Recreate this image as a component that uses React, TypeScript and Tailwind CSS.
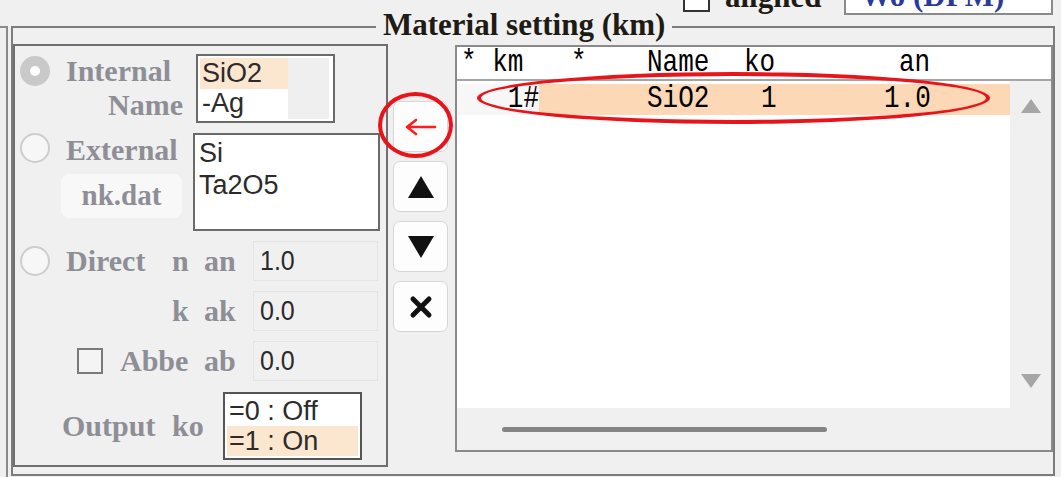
const serif = { fontFamily: '"Liberation Serif", "Times New Roman", serif' };
const sans = { fontFamily: '"Liberation Sans", Arial, sans-serif' };
const mono = { fontFamily: '"Liberation Mono", "Courier New", monospace' };

function Radio({ checked }: { checked?: boolean }) {
  if (checked) {
    return (
      <div className="w-[30px] h-[30px] rounded-full bg-[#c9c9c9] flex items-center justify-center">
        <div className="w-[10px] h-[10px] rounded-full bg-white" />
      </div>
    );
  }
  return <div className="w-[30px] h-[30px] rounded-full bg-[#f7f7f7] border-2 border-[#cdcdcd]" />;
}

function Label({ children, className = "" }: { children: React.ReactNode; className?: string }) {
  return (
    <div className={"text-[30px] font-bold text-[#8e8e96] leading-[34px] whitespace-nowrap " + className} style={serif}>
      {children}
    </div>
  );
}

function ValueBox({ value }: { value: string }) {
  return (
    <div
      className="w-[125px] h-[40px] bg-[#f0f0f0] border border-[#e4e4e4] pl-[6px] flex items-center text-[25px] text-[#2a2a2a]"
      style={sans}
    >
      <span className="inline-block scale-y-[1.12]">{value}</span>
    </div>
  );
}

function Item({ text, selected, w }: { text: string; selected?: boolean; w: string }) {
  return (
    <div
      className={
        "h-[32px] pl-[2px] flex items-center text-[27px] text-[#2b2b2b] leading-none " +
        w +
        (selected ? " bg-[#fbe6d0]" : "")
      }
      style={sans}
    >
      {text}
    </div>
  );
}

function Mono({ children }: { children: React.ReactNode }) {
  return <span className="inline-block scale-y-[1.22]">{children}</span>;
}

function SideButton({ children }: { children: React.ReactNode }) {
  return (
    <div className="w-[55px] h-[51px] bg-[#fdfdfd] border border-[#d6d6d6] rounded-[7px] flex items-center justify-center">
      {children}
    </div>
  );
}

export default function App() {
  return (
    <div className="relative w-[1061px] h-[477px] overflow-hidden bg-[#f0f0f0] flex items-start">
      {/* edge of the previous group */}
      <div className="w-[8px] h-[460px] mt-[26px] border-t-2 border-r-2 border-[#8a8a8a]" />

      {/* Material setting group */}
      <div className="relative ml-[3px] mt-[26px] w-[1044px] h-[450px] border-2 border-[#7c7c7c] flex items-start">
        <div
          className="absolute left-[363px] top-[-21px] px-[7px] bg-[#f0f0f0] text-[31px] font-bold text-[#1e1a14] leading-[36px] whitespace-nowrap"
          style={serif}
        >
          Material setting (km)
        </div>

        {/* cut-off controls at the top right */}
        <div className="absolute left-[670px] top-[-58px] h-[45px] flex items-end">
          <div className="w-[27px] h-[27px] border-2 border-[#333] bg-white mb-[3px]" />
          <div className="ml-[15px] text-[31px] font-bold text-[#1e1a14] leading-[36px]" style={serif}>
            aligned
          </div>
          <div
            className="ml-[23px] w-[209px] h-[45px] border-2 border-[#8a8a8a] bg-white pl-[14px] pt-[6px] text-[31px] font-bold text-[#2b3a9a] leading-[36px] overflow-hidden whitespace-nowrap"
            style={serif}
          >
            Wo (DFM)
          </div>
        </div>

        {/* left panel */}
        <div className="mt-[16px] w-[375px] h-[423px] border-2 border-[#6f6f6f] flex flex-col">
          {/* Internal */}
          <div className="mt-[8px] h-[69px] flex items-start">
            <div className="w-[47px] pl-[5px] pt-[2px]">
              <Radio checked />
            </div>
            <div className="w-[134px]">
              <Label className="pl-[4px]">Internal</Label>
              <Label className="text-right pr-[13px]">Name</Label>
            </div>
            <div className="w-[139px] h-[69px] border-2 border-[#6a6a6a] bg-white p-[2px] flex">
              <div className="flex flex-col">
                <Item text="SiO2" selected w="w-[88px]" />
                <Item text="-Ag" w="w-[88px]" />
              </div>
              <div className="w-[41px] h-full bg-[#efefef]" />
            </div>
          </div>

          {/* External */}
          <div className="mt-[10px] h-[98px] flex items-start">
            <div className="w-[47px] pl-[5px]">
              <Radio />
            </div>
            <div className="w-[131px] flex flex-col">
              <Label className="pl-[4px] leading-[32px]">External</Label>
              <div
                className="mt-[7px] -ml-[1px] w-[121px] h-[44px] rounded-[8px] bg-[#f8f8f8] flex items-center justify-center text-[29px] font-bold text-[#8e8e96]"
                style={serif}
              >
                nk.dat
              </div>
            </div>
            <div className="w-[187px] h-[98px] border-2 border-[#6a6a6a] bg-white p-[2px] flex flex-col">
              <Item text="Si" w="w-full" />
              <Item text="Ta2O5" w="w-full" />
            </div>
          </div>

          {/* Direct n an */}
          <div className="mt-[10px] h-[40px] flex items-center">
            <div className="w-[47px] pl-[5px]">
              <Radio />
            </div>
            <Label className="w-[110px] pl-[4px]">Direct</Label>
            <Label className="w-[32px]">n</Label>
            <Label className="w-[49px]">an</Label>
            <ValueBox value="1.0" />
          </div>

          {/* k ak */}
          <div className="mt-[10px] h-[40px] flex items-center">
            <div className="w-[157px]" />
            <Label className="w-[32px]">k</Label>
            <Label className="w-[49px]">ak</Label>
            <ValueBox value="0.0" />
          </div>

          {/* Abbe ab */}
          <div className="mt-[10px] h-[40px] flex items-center">
            <div className="w-[62px]" />
            <div className="w-[26px] h-[26px] border-2 border-[#7a7a7a] bg-[#f4f4f4]" />
            <Label className="ml-[17px] w-[84px]">Abbe</Label>
            <Label className="w-[49px]">ab</Label>
            <ValueBox value="0.0" />
          </div>

          {/* Output ko */}
          <div className="mt-[11px] h-[68px] flex items-center">
            <div className="w-[47px]" />
            <Label className="w-[110px]">Output</Label>
            <Label className="w-[51px]">ko</Label>
            <div className="w-[139px] h-[68px] border-2 border-[#555] bg-white p-[2px] flex flex-col">
              <Item text="=0 : Off" w="w-full" />
              <Item text="=1 : On" selected w="w-full" />
            </div>
          </div>
        </div>

        {/* middle buttons */}
        <div className="ml-[5px] mt-[73px] flex flex-col gap-[9px]">
          <SideButton>
            <svg width="34" height="20" viewBox="0 0 34 20">
              <path d="M3 10 H31 M3 10 L12 3 M3 10 L12 17" stroke="#ff1e1e" strokeWidth="2.6" fill="none" strokeLinecap="round" />
            </svg>
          </SideButton>
          <SideButton>
            <svg width="28" height="24" viewBox="0 0 28 24">
              <polygon points="14,1 27,23 1,23" fill="#111" />
            </svg>
          </SideButton>
          <SideButton>
            <svg width="28" height="24" viewBox="0 0 28 24">
              <polygon points="1,1 27,1 14,23" fill="#111" />
            </svg>
          </SideButton>
          <SideButton>
            <svg width="26" height="24" viewBox="0 0 26 24">
              <path d="M5 4 L21 20 M21 4 L5 20" stroke="#111" strokeWidth="5" strokeLinecap="round" />
            </svg>
          </SideButton>
        </div>

        {/* list view */}
        <div className="ml-[7px] mt-[17px] w-[598px] h-[407px] border-2 border-[#8a8a8a] bg-white flex flex-col">
          <div className="h-[34px] border-b-2 border-[#a4a4a4] flex items-center text-[26px] text-black whitespace-pre" style={mono}>
            <div className="w-[82px] pl-[4px]"><Mono>* km</Mono></div>
            <div className="w-[108px] pl-[32px]"><Mono>*</Mono></div>
            <div className="w-[97px]"><Mono>Name</Mono></div>
            <div className="w-[155px]"><Mono>ko</Mono></div>
            <div><Mono>an</Mono></div>
          </div>
          <div className="flex-1 flex">
            <div className="flex-1 pt-[3px]">
              <div className="h-[31px] flex items-center text-[26px] text-black whitespace-pre" style={mono}>
                <div className="w-[82px] h-full bg-[#f7f7f7] flex items-center justify-end"><Mono>1#</Mono></div>
                <div className="flex-1 h-full bg-[#fcd8b6] flex items-center">
                  <div className="w-[108px]" />
                  <div className="w-[114px]"><Mono>SiO2</Mono></div>
                  <div className="w-[123px]"><Mono>1</Mono></div>
                  <div><Mono>1.0</Mono></div>
                </div>
              </div>
            </div>
            <div className="w-[41px] bg-[#f0f0f0] flex flex-col items-center justify-between pt-[18px] pb-[20px]">
              <svg width="20" height="14" viewBox="0 0 20 14">
                <polygon points="10,0 20,14 0,14" fill="#a6a6a6" />
              </svg>
              <svg width="20" height="14" viewBox="0 0 20 14">
                <polygon points="0,0 20,0 10,14" fill="#a6a6a6" />
              </svg>
            </div>
          </div>
          <div className="h-[42px] bg-[#f0f0f0] flex items-center">
            <div className="ml-[45px] w-[325px] h-[5px] rounded-full bg-[#848484]" />
          </div>
        </div>

        {/* red highlight marks */}
        <div className="absolute left-[365px] top-[64px] w-[75px] h-[66px] rounded-[50%] border-[4px] border-[#e8141a]" />
        <div className="absolute left-[464px] top-[44px] w-[513px] h-[52px] rounded-[50%] border-[4px] border-[#e8141a]" />
      </div>
    </div>
  );
}
